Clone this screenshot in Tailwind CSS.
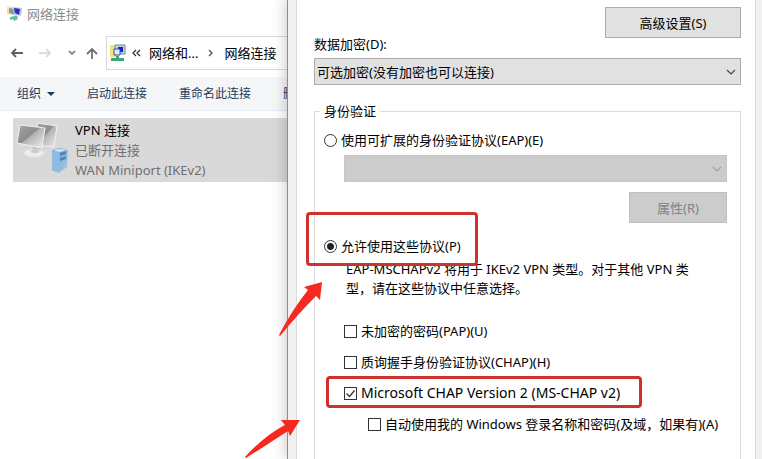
<!DOCTYPE html>
<html lang="zh-CN">
<head>
  <meta charset="UTF-8" />
  <title>网络连接</title>
  <script src="https://cdn.jsdelivr.net/npm/@tailwindcss/browser@4"></script>
</head>
<body class="relative flex h-screen overflow-hidden bg-white font-['Noto_Sans','Noto_Sans_CJK_SC',sans-serif] text-[13px] leading-5 text-black">

  <!-- 网络连接窗口 -->
  <section class="flex w-[287px] shrink-0 flex-col overflow-hidden whitespace-nowrap">
    <header class="flex h-7 items-center gap-1 pl-[7px] text-[#8b8b8b]">
      <svg class="size-4" viewBox="0 0 16 16">
        <path d="M0 1l5-1v9l-5-1z" fill="#f3e58f" />
        <path d="M2 2l6 1v6l-6-2z" fill="#8296b8" />
        <path d="M6 1l9 1-1 8-7-2z" fill="#b9c4d4" />
        <path d="M7 2l6 1-1 6-4-2z" fill="#2c2cc4" />
        <path d="M3 11l5-1 1-1 2 2-1 1 1 1-4 2-1-2-3 1z" fill="#62bd98" />
      </svg>
      <span>网络连接</span>
    </header>

    <nav class="flex h-[49px] items-center">
      <button class="ml-2 mr-3 w-4" aria-label="后退">
        <svg class="size-4" viewBox="0 0 16 16" fill="none" stroke="#606060" stroke-width="1.8"><path d="M15 8H4M8 4L4 8l4 4" /></svg>
      </button>
      <button class="mr-3 w-4" aria-label="前进">
        <svg class="size-4" viewBox="0 0 16 16" fill="none" stroke="#d4d4d4" stroke-width="1.6"><path d="M3 8h11M10 4l4 4-4 4" /></svg>
      </button>
      <button class="mr-1 w-4" aria-label="历史记录">
        <svg class="size-4" viewBox="0 0 16 16" fill="none" stroke="#8a8a8a" stroke-width="1.8"><path d="M5 6l3 3 3-3" /></svg>
      </button>
      <button class="mr-[6px] w-4" aria-label="向上">
        <svg class="size-4" viewBox="0 0 16 16" fill="none" stroke="#707070" stroke-width="1.8"><path d="M8 14V4M3 9l5-5 5 5" /></svg>
      </button>
      <div class="flex h-[34px] flex-1 items-center border border-r-0 border-[#d9d9d9] pl-0.5">
        <svg class="size-[18px]" viewBox="0 0 18 18">
          <path d="M1 1h7v12H1z" fill="#f2e37c" />
          <path d="M6 1h10v9H6z" fill="#c4d2e6" stroke="#6f88ad" />
          <path d="M9 3h5v5H9z" fill="#1c1cc4" />
          <path d="M5 5h6v6H5z" fill="#e4edf8" stroke="#3346b5" />
          <path d="M7 12h3v2h5v3H2v-3h5z" fill="#3ba878" />
        </svg>
        <svg class="ml-1 mr-[6px] size-3" viewBox="0 0 12 12" fill="none" stroke="#333" stroke-width="1.3"><path d="M5 3L2 6l3 3M9 3L6 6l3 3" /></svg>
        <a href="#">网络和...</a>
        <svg class="mx-[7px] size-3" viewBox="0 0 12 12" fill="none" stroke="#555" stroke-width="1.4"><path d="M4 3l3 3-3 3" /></svg>
        <a href="#">网络连接</a>
      </div>
    </nav>

    <div class="flex h-[34px] shrink-0 items-center border-b border-[#e3eaf3] bg-[#f5f6f7] pl-[17px] text-xs text-[#1e395b]">
      <button class="mr-[30px] flex items-center gap-1">组织
        <svg class="h-2 w-3" viewBox="0 0 12 8"><path d="M2 2h8L6 6z" fill="#1e395b" /></svg>
      </button>
      <button class="mr-8">启动此连接</button>
      <button class="mr-8">重命名此连接</button>
      <button>删除此连接</button>
    </div>

    <div class="ml-[13px] mt-[7px] flex h-16 bg-[#d9d9d9] pl-1">
      <svg class="mr-1 mt-1 h-14 w-[54px] shrink-0" viewBox="0 0 54 56">
        <defs>
          <linearGradient id="screen" x1="0" y1="0" x2="1" y2="1">
            <stop offset="0" stop-color="#a8a8a8" />
            <stop offset="0.45" stop-color="#8c8c8c" />
            <stop offset="0.5" stop-color="#b4b4b4" />
            <stop offset="1" stop-color="#f0f0f0" />
          </linearGradient>
          <linearGradient id="tower" x1="0" y1="0" x2="1" y2="1">
            <stop offset="0" stop-color="#6fa2d0" />
            <stop offset="1" stop-color="#a9cbe8" />
          </linearGradient>
        </defs>
        <path d="M20 1l20 3-3 21-15-2z" fill="url(#screen)" stroke="#f0f0f0" />
        <path d="M15 23l8 1 1 5-8-1z" fill="#c4c4c4" />
        <ellipse cx="17" cy="31" rx="10" ry="4" fill="#ececec" />
        <ellipse cx="18" cy="29" rx="4" ry="2" fill="#cacaca" />
        <path d="M3 3l25 3-3 20-25-5z" fill="url(#screen)" stroke="#f0f0f0" />
        <path d="M35 28l8-2 8 2-1 17-8 6-7-3z" fill="url(#tower)" />
        <path d="M35 28l7 2v21l-7-3z" fill="#8fbbe2" />
        <path d="M43 31l6-2v3l-6 2zM43 36l6-2v3l-6 2z" fill="#4a86bd" />
        <path d="M36 28l7-1 7 1-8 2z" fill="#d3e6f5" />
      </svg>
      <div class="pt-0.5">
        <p>VPN 连接</p>
        <p class="text-[#707070]">已断开连接</p>
        <p class="text-[#707070]">WAN Miniport (IKEv2)</p>
      </div>
    </div>
  </section>

  <!-- 属性对话框 -->
  <section class="relative flex min-w-0 flex-1 border-l border-[#8e8e8e] bg-[#f0f0f0] pl-2 shadow-[0_0_14px_rgba(0,0,0,0.25)]">
    <form class="mr-[6px] flex min-w-0 flex-1 flex-col border-x border-[#dcdcdc] bg-white pl-[17px] pr-[14px] pt-[7px]">
      <button type="button" class="h-[31px] w-[136px] self-end border border-[#adadad] bg-[#e1e1e1]">高级设置(S)</button>
      <label for="encryption" class="-mt-1">数据加密(D):</label>
      <div class="relative mt-1">
        <select id="encryption" class="block h-[27px] w-full appearance-none border border-[#adadad] bg-[#e1e1e1] pl-0.5"><option>可选加密(没有加密也可以连接)</option></select>
        <svg class="pointer-events-none absolute right-1 top-2 size-3" viewBox="0 0 12 12" fill="none" stroke="#444" stroke-width="1.2"><path d="M2 4l4 4 4-4" /></svg>
      </div>

      <fieldset class="mt-4 min-w-0 flex-1 border border-b-0 border-[#dcdcdc] pl-[9px] pr-[13px]">
        <legend class="-ml-1 px-1">身份验证</legend>

        <label class="mt-[9px] flex items-center gap-1">
          <input type="radio" name="auth" class="size-[13px] appearance-none rounded-full border border-[#333] bg-white" />
          使用可扩展的身份验证协议(EAP)(E)
        </label>
        <div class="relative ml-5 mt-[5px]">
          <select disabled aria-label="EAP 类型" class="block h-[27px] w-full appearance-none border border-[#c6c6c6] bg-[#cccccc]"></select>
          <svg class="pointer-events-none absolute right-1 top-2 size-3" viewBox="0 0 12 12" fill="none" stroke="#a0a0a0" stroke-width="1.2"><path d="M2 4l4 4 4-4" /></svg>
        </div>
        <button type="button" disabled class="ml-auto mt-[10px] block h-[31px] w-[98px] border border-[#bfbfbf] bg-[#cccccc] text-[#838383]">属性(R)</button>

        <div class="relative mt-[13px]">
          <label class="flex items-center gap-1">
            <input type="radio" name="auth" checked class="size-[13px] appearance-none rounded-full border border-[#333] bg-white checked:bg-[radial-gradient(circle,#222_3px,#fff_4px)]" />
            允许使用这些协议(P)
          </label>
          <span class="pointer-events-none absolute -left-[18px] -top-6 z-10 h-[54px] w-[172px] rounded-sm border-3 border-[#d0312d]"></span>
        </div>
        <p class="ml-[22px] mt-1 pr-5 leading-[19px]">EAP-MSCHAPv2 将用于 IKEv2 VPN 类型。对于其他 VPN 类型，请在这些协议中任意选择。</p>

        <div class="ml-5 mt-[23px] flex flex-col gap-[11px] whitespace-nowrap">
          <label class="flex items-center gap-1">
            <input type="checkbox" class="size-[13px] appearance-none border border-[#333] bg-white" />
            未加密的密码(PAP)(U)
          </label>
          <label class="flex items-center gap-1">
            <input type="checkbox" class="size-[13px] appearance-none border border-[#333] bg-white" />
            质询握手身份验证协议(CHAP)(H)
          </label>
          <div class="relative">
            <label class="flex items-center gap-1 text-sm leading-5">
              <span class="relative flex">
                <input type="checkbox" checked class="size-[13px] appearance-none border border-[#333] bg-white" />
                <svg class="pointer-events-none absolute inset-0 size-[13px]" viewBox="0 0 13 13" fill="none" stroke="#333" stroke-width="1.3"><path d="M2.5 6.5l3 3 5-6" /></svg>
              </span>
              Microsoft CHAP Version 2 (MS-CHAP v2)
            </label>
            <span class="pointer-events-none absolute -left-[18px] -top-[7px] h-8 w-[316px] rounded-sm border-3 border-[#d0312d]"></span>
          </div>
          <label class="ml-6 flex items-center gap-1">
            <input type="checkbox" class="size-[13px] appearance-none border border-[#333] bg-white" />
            自动使用我的 Windows 登录名称和密码(及域，如果有)(A)
          </label>
        </div>
      </fieldset>
    </form>
  </section>

  <!-- 标注箭头 -->
  <svg class="pointer-events-none absolute left-[240px] top-[276px] h-[184px] w-[90px]" viewBox="0 0 90 184" fill="#f5291f">
    <path d="M82 6L80 24l-4-4Q58 38 40 60l-1-1Q52 34 68 14l-4-3z" />
    <path d="M60 144L50 160l-2-5Q28 168 6 182l-1-1Q24 160 45 149l-4-5z" />
  </svg>
</body>
</html>
